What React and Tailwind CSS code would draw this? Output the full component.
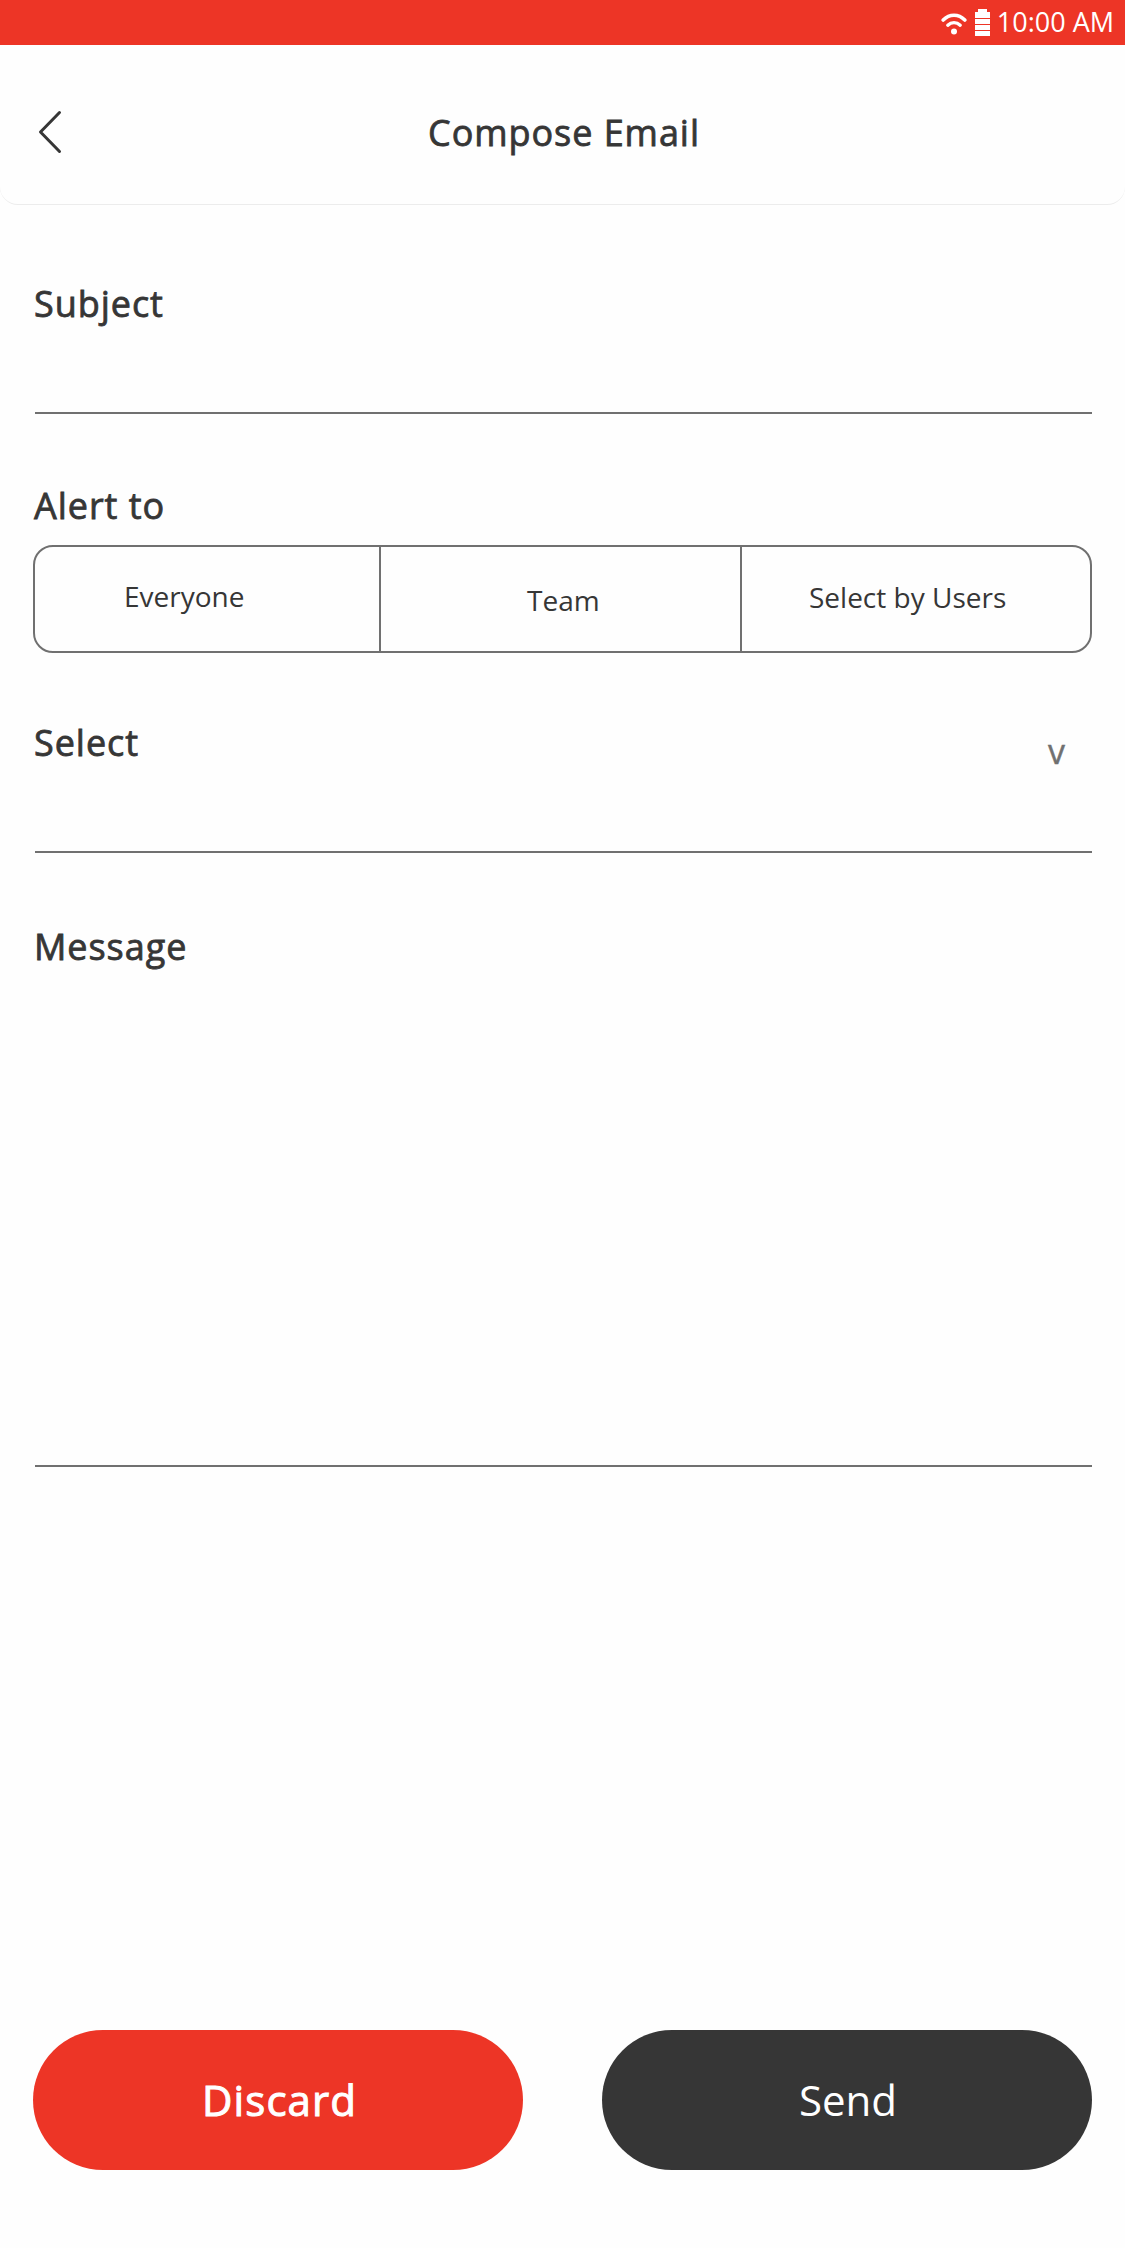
function Wifi() {
  return (
    <svg width="26" height="22" viewBox="0 0 26 22" fill="none" stroke="#fff" strokeLinecap="round">
      <path d="M2.2 7C8.5 0.6 17.5 0.6 23.8 7" strokeWidth="3.6" />
      <path d="M6.8 12.2C10.4 8.8 15.6 8.8 19.2 12.2" strokeWidth="3.4" />
      <circle cx="13" cy="18.6" r="3" fill="#fff" stroke="none" />
    </svg>
  );
}

function Battery() {
  return (
    <div className="flex w-[15px] flex-col items-center gap-px">
      <div className="-mb-px h-[3px] w-[9px] bg-white" />
      <div className="h-[6px] w-full bg-white" />
      <div className="h-[5px] w-full bg-white" />
      <div className="h-[5px] w-full bg-white" />
      <div className="h-[5px] w-full bg-white" />
    </div>
  );
}

function Label({ children }) {
  return (
    <div className="text-[36px] leading-[48px] tracking-[0.95px] [-webkit-text-stroke:0.8px_#363636]">
      {children}
    </div>
  );
}

export default function App() {
  return (
    <div className="flex h-[2248px] w-[1125px] flex-col bg-[#fefefe] font-['Open_Sans',sans-serif] text-[#363636]">
      <div className="flex h-[45px] items-start justify-end bg-[#ed3526] pr-[11px] text-white">
        <div className="mr-[8px] mt-[13px]">
          <Wifi />
        </div>
        <div className="mr-[7px] mt-[9px]">
          <Battery />
        </div>
        <div className="mt-[4px] text-[27px] leading-[36px]">10:00 AM</div>
      </div>

      <header className="flex h-[160px] items-start rounded-b-[18px] border-b border-[#ececec] bg-[#fefefe] pt-[63px]">
        <svg className="ml-[37px]" width="26" height="48" viewBox="0 0 26 48" fill="none">
          <path d="M22.5 4.5L3.5 24L22.5 43.5" stroke="#363636" strokeWidth="3" strokeLinecap="round" strokeLinejoin="round" />
        </svg>
        <div className="ml-[365px] mt-px">
          <Label>Compose Email</Label>
        </div>
      </header>

      <main className="ml-[33px] flex w-[1059px] grow flex-col">
        <section className="ml-[2px] h-[209px] border-b-2 border-[#707070] pt-[75px]">
          <div className="-ml-px">
            <Label>Subject</Label>
          </div>
        </section>

        <section className="mt-[68px]">
          <div className="ml-px">
            <Label>Alert to</Label>
          </div>
          <div className="mt-[15px] flex h-[108px] rounded-[20px] border-2 border-[#707070] text-[28px] leading-[38px]">
            <div className="w-[346px] border-r-2 border-[#707070] pl-[89px] pt-[30px]">Everyone</div>
            <div className="w-[361px] border-r-2 border-[#707070] pl-[146px] pt-[34px]">Team</div>
            <div className="grow pl-[67px] pt-[31px]">Select by Users</div>
          </div>
        </section>

        <section className="ml-[2px] flex h-[200px] justify-between border-b-2 border-[#707070] pt-[66px]">
          <div className="-ml-px">
            <Label>Select</Label>
          </div>
          <div className="mr-[27px] mt-[9px] text-[34px] leading-[46px] text-[#707070] [-webkit-text-stroke:0.4px_#707070]">v</div>
        </section>

        <section className="ml-[2px] h-[614px] border-b-2 border-[#707070] pt-[70px]">
          <div className="-ml-px">
            <Label>Message</Label>
          </div>
        </section>

        <div className="mb-[78px] mt-auto flex justify-between text-[42px] leading-[58px] text-white">
          <button className="flex h-[140px] w-[490px] items-center rounded-full bg-[#ed3526] pl-[169px] tracking-[1.1px] [-webkit-text-stroke:1px_#fff]">
            Discard
          </button>
          <button className="flex h-[140px] w-[490px] items-center rounded-full bg-[#363636] pl-[197px]">
            Send
          </button>
        </div>
      </main>
    </div>
  );
}
